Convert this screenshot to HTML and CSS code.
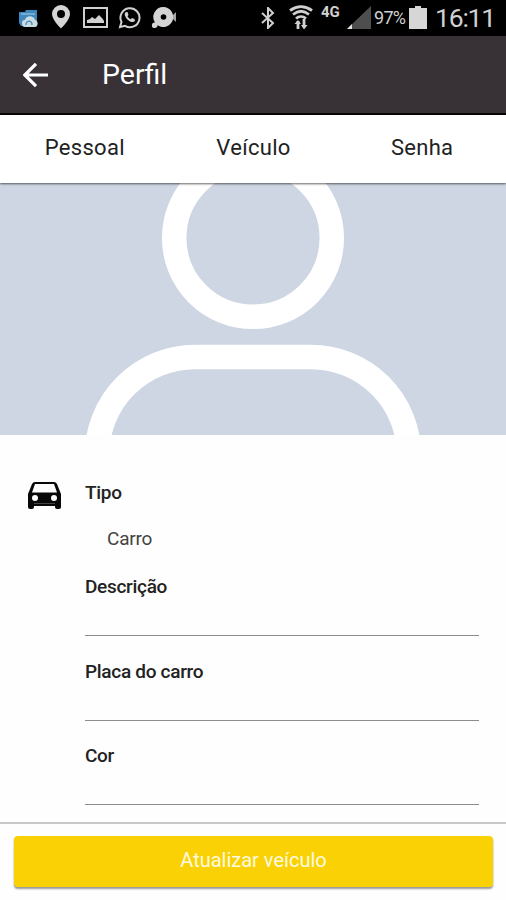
FILE: index.html
```html
<!DOCTYPE html>
<html lang="pt-BR">
<head>
    <meta charset="UTF-8">
    <meta name="viewport" content="width=device-width, initial-scale=1.0">
    <title>Perfil</title>
    <link rel="stylesheet" href="styles.css">
</head>
<body>
    <div class="status-bar">
        <div class="notifications">
            <svg width="20" height="20" viewBox="0 0 20 20">
                <path d="M1 3h6l1-2h11v12l-2 4H3L1 14z" fill="#3f87bd"/>
                <path d="M3 5h14" stroke="#6fabd4" stroke-width="2"/>
                <path d="M4 14c0-3 2-3 3-3 1-5 9-5 10 0 4 1 3 7 0 7H7c-2 0-3-1-3-4z" fill="#c9dbe3"/>
                <path d="M8 16c0-5 6-5 6 0" stroke="#5d93b5" stroke-width="1.500" fill="none"/>
            </svg>
            <svg width="18" height="24" viewBox="0 0 18 24">
                <path d="M9 0a9 9 0 0 0-9 9c0 6 9 14.500 9 14.500S18 15 18 9a9 9 0 0 0-9-9zm0 5a4 4 0 1 1 0 8 4 4 0 0 1 0-8z" fill="#d4d4d4" fill-rule="evenodd"/>
            </svg>
            <svg width="25" height="21" viewBox="0 0 25 21">
                <rect x="1" y="1" width="23" height="19" fill="none" stroke="#d0d0d0" stroke-width="2"/>
                <path d="M4 16v-3l3-1 2-2 3 2 4-4 3 3 2 3v2z" fill="#d0d0d0"/>
            </svg>
            <svg width="23" height="23" viewBox="0 0 23 23">
                <path d="M2 21l1.500-5A9.500 9.500 0 1 1 7 19.800z" fill="none" stroke="#d0d0d0" stroke-width="2"/>
                <path d="M8 6c-3 2 0 6 2 8s5 3 7 1l-.5-2-2.500-1-1.500 1.300c-1-.4-2.500-2-3-3L10.500 9 9.500 6z" fill="#d0d0d0"/>
            </svg>
            <svg width="26" height="23" viewBox="0 0 26 23">
                <path d="M12.500 1a10 10 0 1 1-6 18.200A2.800 2.800 0 1 1 4 16.500 10 10 0 0 1 12.500 1zm0 7.200a2.800 2.800 0 1 0 0 5.600 2.800 2.800 0 0 0 0-5.600z" fill="#d4d4d4" fill-rule="evenodd"/>
                <path d="M22 9l3-3v10l-3-3z" fill="#a5a5a5"/>
            </svg>
        </div>
        <div class="system">
            <svg class="bluetooth" width="14" height="22" viewBox="0 0 14 22">
                <path d="M1 6l11 10-5 5V1l5 5L1 16" fill="none" stroke="#d0d0d0" stroke-width="2"/>
            </svg>
            <svg class="wifi" width="26" height="25" viewBox="0 0 26 25">
                <path d="M2 5.500c7-5 15-5 22 0M5 9.500c5-4 11-4 16 0M8 13.500c3-2.500 7-2.500 10 0" fill="none" stroke="#d0d0d0" stroke-width="2.800"/>
                <path d="M10 24v-8M16 14v8" stroke="#d0d0d0" stroke-width="2.800"/>
                <path d="M6.500 19l3.500-4 3 4zM13 20l3 4.500 3.500-4.500z" fill="#d0d0d0"/>
            </svg>
            <span class="network">4G</span>
            <svg class="signal" width="24" height="23" viewBox="0 0 24 23">
                <path d="M0 23L24 0v23z" fill="#4e4e4e"/>
                <path d="M0 23l5-5v5z" fill="#e4e4e4"/>
            </svg>
            <span class="percent">97%</span>
            <svg class="battery" width="18" height="23" viewBox="0 0 18 23">
                <path d="M0 2h6V0h6v2h6v21H0z" fill="#d6d6d6"/>
            </svg>
            <span class="clock">16:11</span>
        </div>
    </div>

    <header class="toolbar">
        <svg width="26" height="26" viewBox="0 0 26 26">
            <path d="M25 13H3M13 1.800L1.800 13 13 24.200" fill="none" stroke="#fff" stroke-width="3.200"/>
        </svg>
        <h1>Perfil</h1>
    </header>

    <nav class="tabs">
        <a class="tab">Pessoal</a>
        <a class="tab">Veículo</a>
        <a class="tab">Senha</a>
    </nav>

    <div class="photo">
        <svg width="506" height="252" viewBox="0 0 506 252" fill="none" stroke="#fff" stroke-width="24.500">
            <circle cx="253" cy="55" r="78.800"/>
            <path d="M97 290v-18a98 98 0 0 1 98-98h116a98 98 0 0 1 98 98v18"/>
        </svg>
    </div>

    <main class="form">
        <svg class="car" width="33" height="27" viewBox="0 0 33 27">
            <path d="M7 0h19q2 0 3 2l4 10v13q0 2-2 2h-2q-2 0-2-2v-1H6v1q0 2-2 2H2q-2 0-2-2V12L4 2q1-2 3-2zM7 2L4 10.500h25L26 2zM7 13a3 3 0 1 0 0 6 3 3 0 0 0 0-6zm19 0a3 3 0 1 0 0 6 3 3 0 0 0 0-6z" fill="#080808" fill-rule="evenodd"/>
            <path d="M6 21.500h21" stroke="#444" stroke-width="1"/>
        </svg>
        <div class="fields">
            <div class="field type">
                <label>Tipo</label>
                <div class="select">Carro</div>
            </div>
            <div class="field line">
                <label>Descrição</label>
            </div>
            <div class="field line">
                <label>Placa do carro</label>
            </div>
            <div class="field line">
                <label>Cor</label>
            </div>
        </div>
    </main>

    <footer class="footer">
        <button class="submit">Atualizar veículo</button>
    </footer>
</body>
</html>
```
FILE: styles.css
```css
* {
    box-sizing: border-box;
}
body {
    margin: 0;
    height: 900px;
    display: flex;
    flex-direction: column;
    overflow: hidden;
    background: #fefefe;
    font-family: Roboto, sans-serif;
    color: #222;
}
svg {
    display: block;
    flex: none;
}
.status-bar {
    height: 36px;
    flex: none;
    display: flex;
    justify-content: space-between;
    background: #000;
    color: #d0d0d0;
    padding: 0 11px 0 18px;
}
.notifications {
    display: flex;
    align-items: center;
    gap: 14px;
    padding-bottom: 2px;
}
.notifications svg:nth-child(1) {
    margin-top: 3px;
}
.notifications svg:nth-child(3) {
    margin-left: -1px;
}
.notifications svg:nth-child(n+4) {
    margin-left: -4px;
}
.system {
    display: flex;
    align-items: center;
    line-height: 34px;
    padding-bottom: 2px;
}
.bluetooth {
    margin-top: 2px;
}
.wifi {
    margin-left: 13px;
}
.network {
    width: 19px;
    margin-left: 7px;
    font-size: 15px;
    font-weight: 700;
    line-height: 24px;
    align-self: flex-start;
}
.signal {
    margin-left: 7px;
}
.percent {
    width: 32px;
    margin-left: 3px;
    padding-top: 2px;
    font-size: 18px;
    letter-spacing: -0.7px;
}
.battery {
    margin-left: 3px;
}
.clock {
    width: 60px;
    margin-left: 8px;
    padding-top: 1px;
    font-size: 26.500px;
    letter-spacing: -1.2px;
}
.toolbar {
    height: 79px;
    flex: none;
    display: flex;
    align-items: center;
    gap: 53px;
    padding-left: 23px;
    background: #383136;
    border-bottom: 2px solid #070507;
    color: #fff;
}
.toolbar h1 {
    margin: 0;
    font-size: 28.500px;
    font-weight: 400;
    line-height: 40px;
}
.tabs {
    height: 68px;
    flex: none;
    display: grid;
    grid-template-columns: repeat(3, 1fr);
    background: #fff;
    box-shadow: 0 1px 2px rgba(0, 0, 0, 0.6);
    z-index: 1;
}
.tab {
    font-size: 22px;
    line-height: 66px;
    letter-spacing: 0.3px;
    text-align: center;
    padding-left: 1px;
}
.photo {
    height: 252px;
    flex: none;
    background: #cdd6e2;
}
.form {
    flex: 1;
    min-height: 0;
    display: flex;
    padding: 47px 27px 0 28px;
}
.car {
    margin-right: 24px;
}
.fields {
    flex: 1;
}
.field label {
    display: block;
    font-size: 19px;
    font-weight: 500;
    line-height: 24px;
    letter-spacing: -0.3px;
}
.type {
    height: 94px;
    margin-top: -1px;
}
.select {
    padding: 22px 0 0 22px;
    font-size: 19px;
    line-height: 24px;
    letter-spacing: -0.2px;
    color: #444;
}
.line {
    height: 61px;
    margin-bottom: 23.500px;
    border-bottom: 1px solid #8c8c8c;
}
.line label {
    line-height: 23px;
}
.footer {
    height: 78px;
    flex: none;
    border-top: 2px solid #c8c8c8;
    padding: 12px 13px 0 14px;
}
.submit {
    display: block;
    width: 100%;
    height: 51px;
    border: none;
    border-radius: 4px;
    background: #fad105;
    color: #fffbe0;
    font-family: inherit;
    font-size: 20px;
    line-height: 48px;
    padding: 0 0 3px;
    box-shadow: 0 2px 2px rgba(0, 0, 0, 0.4);
}
```
